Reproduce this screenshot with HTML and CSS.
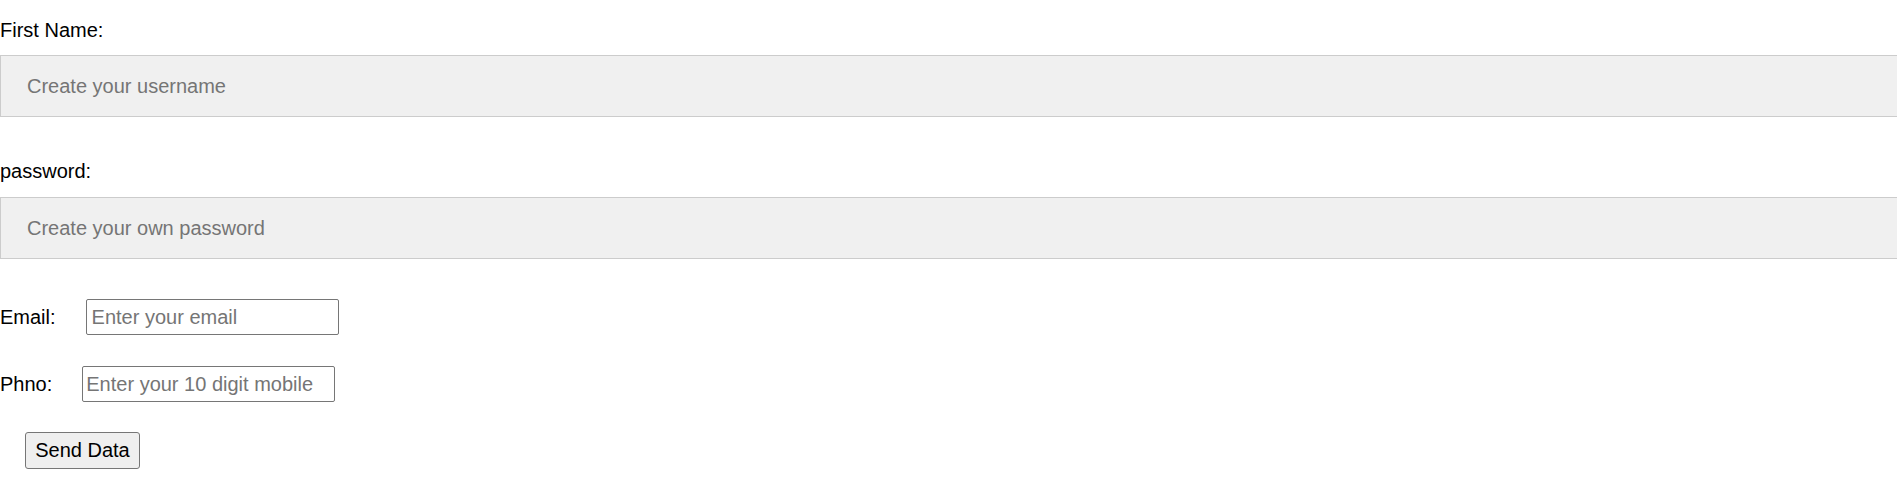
FILE: index.html
```html
<!DOCTYPE html>
<html lang="en">
<head>
<meta charset="utf-8">
<title>Form</title>
<link rel="stylesheet" href="styles.css">
</head>
<body>
<form class="form">
  <label class="label label-first" for="fname">First Name:</label>
  <input class="wide-input" id="fname" type="text" placeholder="Create your username">
  <label class="label label-second" for="pwd">password:</label>
  <input class="wide-input wide-second" id="pwd" type="password" placeholder="Create your own password">
  <div class="row row-email">
    <label class="row-label" for="email">Email:</label>
    <input class="small-input" id="email" type="email" placeholder="Enter your email">
  </div>
  <div class="row row-phone">
    <label class="row-label" for="phno">Phno:</label>
    <input class="small-input phone-input" id="phno" type="tel" placeholder="Enter your 10 digit mobile number">
  </div>
  <button class="send" type="button">Send Data</button>
</form>
</body>
</html>
```
FILE: styles.css
```css
html, body {
  margin: 0;
  padding: 0;
  background: #ffffff;
  overflow: hidden;
}
body {
  font-family: "Liberation Sans", Arial, sans-serif;
  font-size: 20px;
  color: #000000;
}
.form {
  display: flex;
  flex-direction: column;
  align-items: flex-start;
}
.label {
  display: block;
  line-height: 23px;
  height: 23px;
}
.label-first {
  margin-top: 19px;
}
.label-second {
  margin-top: 43px;
}
.wide-input {
  box-sizing: border-box;
  width: calc(100% + 4px);
  height: 62px;
  margin-top: 13px;
  padding: 0 0 0 26px;
  background: #f0f0f0;
  border: 1px solid #cccccc;
  border-right: none;
  font-family: "Liberation Sans", Arial, sans-serif;
  font-size: 20px;
  color: #000000;
  outline: none;
}
.wide-second {
  margin-top: 14px;
}
.wide-input::placeholder,
.small-input::placeholder {
  color: #757575;
  opacity: 1;
}
.row {
  display: flex;
  align-items: center;
  gap: 30px;
}
.row-email {
  margin-top: 40px;
}
.row-phone {
  margin-top: 31px;
}
.row-label {
  line-height: 23px;
}
.small-input {
  box-sizing: border-box;
  width: 253px;
  height: 36px;
  padding: 0 5px;
  border: 1px solid #767676;
  border-radius: 2px;
  background: #ffffff;
  font-family: "Liberation Sans", Arial, sans-serif;
  font-size: 20px;
  color: #000000;
}
.phone-input {
  padding-left: 3px;
  padding-right: 18px;
}
.send {
  box-sizing: border-box;
  margin: 30px 0 0 25px;
  width: 115px;
  height: 37px;
  padding: 0 9px;
  background: #efefef;
  border: 1px solid #767676;
  border-radius: 3px;
  font-family: "Liberation Sans", Arial, sans-serif;
  font-size: 20px;
  color: #000000;
}
```
